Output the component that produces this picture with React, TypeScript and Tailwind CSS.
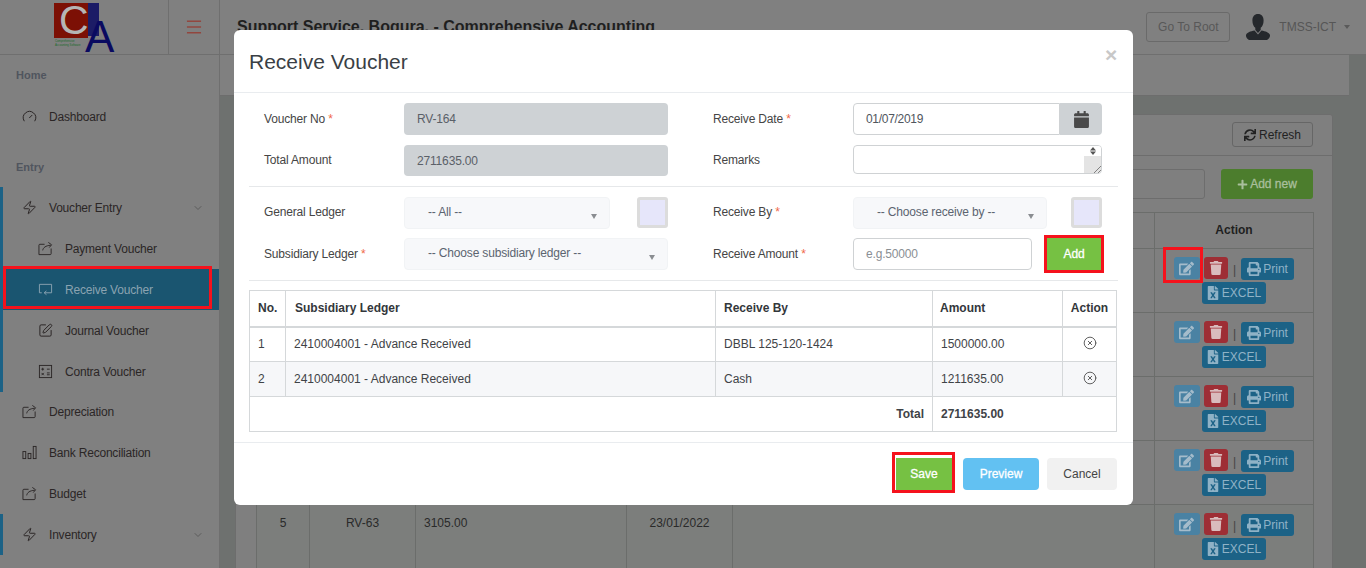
import type { ReactNode } from 'react';
import { CircleX, ChevronDown, Gauge, Menu, SquarePen, Zap } from 'lucide-react';
import { FaCalendar, FaEdit, FaFileExcel, FaPlus, FaPrint, FaSync, FaTrash } from 'react-icons/fa';

const ShareIcon = () => (
  <svg viewBox="0 0 16 16" className="h-[15px] w-[15px]" fill="none" stroke="currentColor" strokeWidth={1}>
    <path d="M7 3.500H2a1 1 0 0 0-1 1v10h12a1 1 0 0 0 1-1V8" />
    <path d="M5 10c.6-3 3-5 8.500-5.500M11 1.500l3.500 2.500L12 7" />
  </svg>
);

const ReceiveIcon = () => (
  <svg viewBox="0 0 16 16" className="h-[15px] w-[15px]" fill="none" stroke="currentColor" strokeWidth={1}>
    <path d="M4 11.500H1.500v-9h13v9H7" />
    <path d="M9 9.500l-2.500 2 2.500 2" />
  </svg>
);

const CalcIcon = () => (
  <svg viewBox="0 0 16 16" className="h-[15px] w-[15px]" fill="none" stroke="currentColor" strokeWidth={1}>
    <rect x="1.500" y="1.500" width="13" height="13" />
    <path d="M3.500 5.500h3M5 4v3M9.500 5.500h3M3.800 9.500l2.400 2.400M6.200 9.500l-2.400 2.400M9.500 9.500h3M9.500 11.500h3" />
  </svg>
);

const BarsIcon = () => (
  <svg viewBox="0 0 16 16" className="h-[15px] w-[15px]" fill="none" stroke="currentColor" strokeWidth={1}>
    <rect x="1" y="7" width="3" height="7.500" />
    <rect x="6.500" y="9" width="3" height="5.500" />
    <rect x="12" y="1.500" width="3" height="13" />
  </svg>
);

const Logo = () => (
  <svg viewBox="0 0 62 52" className="h-[52px] w-[62px] overflow-visible">
    <rect x="1" y="2" width="34" height="35" fill="#7c1005" />
    <rect x="35" y="2" width="11" height="33" fill="#1c1c66" />
    <text x="6" y="33" fontSize="41" fill="#b5b5b5" fontFamily="Liberation Sans, sans-serif">C</text>
    <text x="32" y="51" fontSize="44" fill="#0a0a60" fontFamily="Liberation Sans, sans-serif">A</text>
    <text x="2" y="40.500" fontSize="2.800" fill="#1c6b2c" fontFamily="Liberation Sans, sans-serif">Comprehensive</text>
    <text x="2" y="44.500" fontSize="2.800" fill="#1c6b2c" fontFamily="Liberation Sans, sans-serif">Accounting Software</text>
  </svg>
);

const Avatar = () => (
  <svg viewBox="0 0 26 26" className="h-[26px] w-[26px]">
    <path d="M13 0c3.600 0 5.600 2.600 5.600 6.400 0 3.400-1.300 6-2.900 7.400v2.200L13 19l-2.700-3v-2.200C8.700 12.400 7.400 9.800 7.400 6.400 7.400 2.600 9.400 0 13 0z" fill="#25282c" />
    <path d="M9.500 16.500 13 20.500l3.500-4c4 .8 7.500 2 8.500 4.500.4 1.500-1 4-3 5H4c-2-1-3.400-3.500-3-5 1-2.500 4.500-3.700 8.500-4.500z" fill="#25282c" />
  </svg>
);

const Triangle = () => (
  <svg viewBox="0 0 6 5" className="mt-[7px] h-[5px] w-[6px] shrink-0">
    <path d="M0 0h6L3 5z" fill="#8a8d91" />
  </svg>
);

const NavItem = ({ icon, label, sub, arrow }: { icon: ReactNode; label: string; sub?: boolean; arrow?: boolean }) => (
  <div className={`flex h-[41px] items-center text-[#2b2626] ${sub ? 'pl-[38px]' : 'pl-[22px]'}`}>
    <span className="flex w-[27px] shrink-0">{icon}</span>
    <span>{label}</span>
    {arrow && <ChevronDown className="ml-auto mr-[15px] h-[12px] w-[12px] text-[#5c5c5c]" strokeWidth={2} />}
  </div>
);

const Sidebar = () => (
  <aside className="h-full w-[220px] shrink-0 border-r border-[#6f6f6f] bg-[#808080] tracking-[-0.2px]">
    <div className="flex h-[41px] items-center pl-[16px] text-[11px] font-bold tracking-normal text-[#50555e]">Home</div>
    <NavItem icon={<Gauge className="h-[15px] w-[15px]" strokeWidth={1.6} />} label="Dashboard" />
    <div className="mt-[10px] flex h-[40px] items-center pl-[16px] text-[11px] font-bold tracking-normal text-[#50555e]">Entry</div>
    <div className="h-[205px] border-l-[3px] border-[#1c6286] [&>div]:-ml-[3px]">
      <NavItem icon={<Zap className="h-[15px] w-[15px]" strokeWidth={1.6} />} label="Voucher Entry" arrow />
      <NavItem icon={<ShareIcon />} label="Payment Voucher" sub />
      <div className="ml-0! flex h-[41px] items-center bg-[#1a5570] pl-[35px] text-[#8ba3b1]">
        <span className="flex w-[27px] shrink-0"><ReceiveIcon /></span>
        <span>Receive Voucher</span>
      </div>
      <NavItem icon={<SquarePen className="h-[15px] w-[15px]" strokeWidth={1.6} />} label="Journal Voucher" sub />
      <NavItem icon={<CalcIcon />} label="Contra Voucher" sub />
    </div>
    <div className="-mt-px">
      <NavItem icon={<ShareIcon />} label="Depreciation" />
      <NavItem icon={<BarsIcon />} label="Bank Reconciliation" />
      <NavItem icon={<ShareIcon />} label="Budget" />
    </div>
    <div className="border-l-[3px] border-[#1c6286] [&>div]:-ml-[3px]">
      <NavItem icon={<Zap className="h-[15px] w-[15px]" strokeWidth={1.6} />} label="Inventory" arrow />
    </div>
  </aside>
);

const ActionCell = () => (
  <td className="border border-[#6b6d6b] px-0 pt-[8px] align-top">
    <div className="flex items-start justify-center">
      <span className="flex h-[22px] w-[26px] items-center justify-center rounded-[3px] bg-[#4a82a3] text-[#a5bccb]">
        <FaEdit className="h-[15px] w-[15px]" />
      </span>
      <span className="ml-[4px] flex h-[22px] w-[24px] items-center justify-center rounded-[3px] bg-[#9e2e35] text-[#d9bcbd]">
        <FaTrash className="h-[14px] w-[14px]" />
      </span>
      <span className="mx-[5px] mt-[4px] text-[#444]">|</span>
      <span className="mt-[1px] flex h-[22px] w-[53px] items-center justify-center gap-[2px] rounded-[3px] bg-[#1c6286] text-[#8fb2c6]">
        <FaPrint className="h-[14px] w-[14px]" />Print
      </span>
    </div>
    <div className="mt-[2px] flex justify-center">
      <span className="flex h-[22px] w-[64px] items-center justify-center gap-[3px] rounded-[3px] bg-[#1c6286] text-[#8fb2c6]">
        <FaFileExcel className="h-[14px] w-[12px]" />EXCEL
      </span>
    </div>
  </td>
);

const Backdrop = () => (
  <div className="flex h-full flex-col">
    <header className="flex h-[55px] shrink-0 items-center border-b border-[#6f6f6f] bg-[#808080]">
      <div className="flex h-full w-[169px] items-start justify-center border-r border-[#6f6f6f] pt-[1px]">
        <Logo />
      </div>
      <div className="flex h-full w-[51px] items-center justify-center border-r border-[#6f6f6f] text-[#9c2a1e]">
        <Menu className="h-[20px] w-[20px]" strokeWidth={1.2} />
      </div>
      <div className="ml-[17px] text-[16px] font-bold tracking-normal text-[#1f1f1f]">Support Service, Bogura. - Comprehensive Accounting</div>
      <div className="ml-auto flex h-[30px] w-[84px] items-center justify-center rounded-[3px] border border-[#6a6a6a] text-[#585858]">Go To Root</div>
      <div className="ml-[15px]"><Avatar /></div>
      <span className="ml-[8px] text-[#565656]">TMSS-ICT</span>
      <span className="ml-[8px] mr-[16px] h-0 w-0 border-x-[3px] border-t-[4px] border-x-transparent border-t-[#5a5a5a]" />
    </header>
    <div className="flex min-h-0 flex-1">
      <Sidebar />
      <main className="flex-1 overflow-hidden bg-[#6e716f]">
        <div className="h-[41px] w-[1129px] border-b border-[#6d6d6d] bg-[#808080]" />
        <section className="ml-[15px] mt-[18px] w-[1098px] rounded-t-[3px] border border-[#6d6d6d] bg-[#7f7f7f]">
          <div className="flex h-[41px] items-start justify-end border-b border-[#6d6d6d] pr-[19px] pt-[7px]">
            <span className="flex h-[25px] w-[81px] items-center justify-center gap-[3px] rounded-[3px] border border-[#666] text-[#222]">
              <FaSync className="h-[12px] w-[12px]" />Refresh
            </span>
          </div>
          <div className="flex justify-end gap-[16px] pr-[19px] pt-[13px]">
            <div className="h-[30px] w-[300px] rounded-[3px] border border-[#6d6d6d]" />
            <span className="flex h-[30px] w-[92px] items-center justify-center gap-[2px] rounded-[3px] bg-[#4c7d2d] text-[#a9bf9c] [-webkit-text-stroke:0.3px_#a9bf9c]">
              <FaPlus className="h-[11px] w-[11px]" />Add new
            </span>
          </div>
          <div className="pl-[20px] pr-[19px] pt-[13px]">
            <table className="w-[1057px] table-fixed border-collapse text-[#2a2a2a]">
              <colgroup>
                <col className="w-[53px]" />
                <col className="w-[106px]" />
                <col className="w-[211px]" />
                <col className="w-[106px]" />
                <col className="w-[422px]" />
                <col className="w-[159px]" />
              </colgroup>
              <thead>
                <tr className="h-[36px]">
                  <th className="border border-[#6b6d6b]" />
                  <th className="border border-[#6b6d6b]" />
                  <th className="border border-[#6b6d6b]" />
                  <th className="border border-[#6b6d6b]" />
                  <th className="border border-[#6b6d6b]" />
                  <th className="border border-[#6b6d6b] pb-[2px] font-bold text-[#1f1f1f]">Action</th>
                </tr>
              </thead>
              <tbody>
                {[1, 2, 3, 4].map((n) => (
                  <tr key={n} className="h-[64px]">
                    <td className="border border-[#6b6d6b]" />
                    <td className="border border-[#6b6d6b]" />
                    <td className="border border-[#6b6d6b]" />
                    <td className="border border-[#6b6d6b]" />
                    <td className="border border-[#6b6d6b]" />
                    <ActionCell />
                  </tr>
                ))}
                <tr className="h-[64px] bg-[#7c7e7c]">
                  <td className="border border-[#6b6d6b] pt-[9px] text-center align-top">5</td>
                  <td className="border border-[#6b6d6b] pt-[9px] text-center align-top">RV-63</td>
                  <td className="border border-[#6b6d6b] pl-[8px] pt-[9px] align-top">3105.00</td>
                  <td className="border border-[#6b6d6b] pt-[9px] text-center align-top">23/01/2022</td>
                  <td className="border border-[#6b6d6b]" />
                  <ActionCell />
                </tr>
              </tbody>
            </table>
          </div>
        </section>
      </main>
    </div>
  </div>
);

const Field = ({ label, required, raised, width, children }: { label: string; required?: boolean; raised?: boolean; width: number; children: ReactNode }) => (
  <div className="flex items-center" style={{ width }}>
    <label className={`w-[140px] shrink-0 text-[#454545] ${raised ? 'pb-[2px]' : ''}`}>
      {label}
      {required && <span className="text-[#f0694a]"> *</span>}
    </label>
    {children}
  </div>
);

const Select = ({ text, className }: { text: string; className: string }) => (
  <div className={`flex h-[32px] items-center justify-between rounded-[4px] border border-[#f1f3f5] bg-[#f7f8fa] pl-[23px] pr-[12px] text-[#5b6470] ${className}`}>
    <span className="-mt-[2px]">{text}</span>
    <Triangle />
  </div>
);

const Swatch = () => <div className="h-[31px] w-[31px] -translate-y-px rounded-[3px] border-[3px] border-[#dcdcdc] bg-[#e6e6fa]" />;

const Modal = () => (
  <div className="absolute left-[234px] top-[30px] flex h-[475px] w-[899px] flex-col overflow-hidden rounded-[6px] bg-white tracking-[-0.17px]">
    <div className="flex h-[63px] shrink-0 items-start justify-between border-b border-[#e9ecef] pl-[15px] pr-[16px]">
      <h2 className="mt-[19px] text-[21px] leading-[26px] tracking-normal text-[#3a3f45]">Receive Voucher</h2>
      <span className="mt-[12px] text-[21px] font-bold leading-[26px] text-[#c8c8c8]">×</span>
    </div>
    <div className="flex flex-1 flex-col px-[15px]">
      <div className="flex gap-[45px] pl-[15px] pt-[10px]">
        <Field label="Voucher No" required width={404}>
          <div className="flex h-[32px] flex-1 items-center rounded-[4px] bg-[#ced2d5] pl-[13px] text-[#5a6068]">RV-164</div>
        </Field>
        <Field label="Receive Date" required width={389}>
          <div className="flex h-[32px] flex-1">
            <div className="flex flex-1 items-center rounded-l-[4px] border border-[#cfd2d4] pl-[12px] tracking-[-0.3px] text-[#50565e]">01/07/2019</div>
            <div className="flex w-[42px] items-center justify-center rounded-r-[4px] bg-[#ced2d5] text-[#4a4a4a]">
              <FaCalendar className="h-[17px] w-[17px]" />
            </div>
          </div>
        </Field>
      </div>
      <div className="flex gap-[45px] pl-[15px] pt-[10px]">
        <Field label="Total Amount" raised width={404}>
          <div className="flex h-[31px] flex-1 items-center rounded-[4px] bg-[#ced2d5] pl-[13px] text-[#5a6068]">2711635.00</div>
        </Field>
        <Field label="Remarks" raised width={389}>
          <div className="relative mb-[2px] h-[29px] flex-1">
            <textarea readOnly className="block h-full w-full resize-none overflow-hidden rounded-[4px] border border-[#cfd2d4] outline-none" />
            <div className="absolute bottom-px right-px top-px flex w-[17px] flex-col overflow-hidden rounded-r-[3px]">
              <div className="flex h-[10px] items-center justify-center bg-white">
                <svg viewBox="0 0 6 8" className="h-[8px] w-[6px]"><path d="M3 0l3 3.500H0zM3 8 0 4.500h6z" fill="#555" /></svg>
              </div>
              <div className="flex flex-1 items-end justify-end bg-[#e4e4e4]">
                <svg viewBox="0 0 8 8" className="h-[8px] w-[8px]" fill="none" stroke="#666" strokeWidth={0.8}><path d="M1 8l7-7M5 8l3-3" /></svg>
              </div>
            </div>
          </div>
        </Field>
      </div>
      <div className="mt-[10px] h-px bg-[#e6e8ea]" />
      <div className="flex gap-[45px] pl-[15px] pt-[10px]">
        <Field label="General Ledger" raised width={404}>
          <Select text="-- All --" className="w-[206px]" />
          <div className="ml-[27px]"><Swatch /></div>
        </Field>
        <Field label="Receive By" required raised width={389}>
          <Select text="-- Choose receive by --" className="w-[194px]" />
          <div className="ml-[24px]"><Swatch /></div>
        </Field>
      </div>
      <div className="flex gap-[45px] pl-[15px] pt-[9px]">
        <Field label="Subsidiary Ledger" required width={404}>
          <Select text="-- Choose subsidiary ledger --" className="flex-1" />
        </Field>
        <Field label="Receive Amount" required width={389}>
          <div className="flex h-[32px] w-[179px] items-center rounded-[4px] border border-[#cfd2d4] pl-[12px] text-[#8a8f94]">e.g.50000</div>
          <button className="ml-[15px] h-[32px] w-[54px] bg-[#76c143] text-white outline-[3px] outline-[#f5121c] [-webkit-text-stroke:0.3px_white]">Add</button>
        </Field>
      </div>
      <div className="mt-[10px] h-px bg-[#e6e8ea]" />
      <table className="mt-[9px] w-[867px] table-fixed border-collapse tracking-normal text-[#3f4347]">
        <colgroup>
          <col className="w-[36px]" />
          <col className="w-[430px]" />
          <col className="w-[217px]" />
          <col className="w-[130px]" />
          <col className="w-[54px]" />
        </colgroup>
        <thead>
          <tr className="h-[36px] text-left text-[#33373b]">
            <th className="border border-b-2 border-[#d5d8da] pl-[8px] font-bold">No.</th>
            <th className="border border-b-2 border-[#d5d8da] pl-[9px] font-bold">Subsidiary Ledger</th>
            <th className="border border-b-2 border-[#d5d8da] pl-[8px] font-bold">Receive By</th>
            <th className="border border-b-2 border-[#d5d8da] pl-[7px] font-bold">Amount</th>
            <th className="border border-b-2 border-[#d5d8da] text-center font-bold">Action</th>
          </tr>
        </thead>
        <tbody>
          <tr className="h-[35px]">
            <td className="border border-[#d5d8da] pl-[8px]">1</td>
            <td className="border border-[#d5d8da] pl-[8px]">2410004001 - Advance Received</td>
            <td className="border border-[#d5d8da] pl-[8px]">DBBL 125-120-1424</td>
            <td className="border border-[#d5d8da] pl-[8px]">1500000.00</td>
            <td className="border border-[#d5d8da]"><CircleX className="mx-auto -mt-[2px] h-[14px] w-[14px] text-[#555]" strokeWidth={1.6} /></td>
          </tr>
          <tr className="h-[35px] bg-[#f6f7f9]">
            <td className="border border-[#d5d8da] pl-[8px]">2</td>
            <td className="border border-[#d5d8da] pl-[8px]">2410004001 - Advance Received</td>
            <td className="border border-[#d5d8da] pl-[8px]">Cash</td>
            <td className="border border-[#d5d8da] pl-[8px]">1211635.00</td>
            <td className="border border-[#d5d8da]"><CircleX className="mx-auto -mt-[2px] h-[14px] w-[14px] text-[#555]" strokeWidth={1.6} /></td>
          </tr>
          <tr className="h-[35px]">
            <td colSpan={3} className="border border-[#d5d8da] pr-[8px] text-right font-bold">Total</td>
            <td colSpan={2} className="border border-[#d5d8da] pl-[8px] font-bold">2711635.00</td>
          </tr>
        </tbody>
      </table>
    </div>
    <div className="flex h-[63px] shrink-0 items-start justify-end gap-[8px] border-t border-[#e9ecef] pr-[16px] pt-[9px] tracking-normal">
      <div className="h-[41px] w-[63px] border-[3px] border-[#f5121c] pl-[1px] pt-[3px]">
        <button className="h-[32px] w-[56px] bg-[#76c143] text-white [-webkit-text-stroke:0.3px_white]">Save</button>
      </div>
      <button className="mt-[6px] h-[32px] w-[76px] rounded-[4px] bg-[#62c1f2] text-white [-webkit-text-stroke:0.3px_white]">Preview</button>
      <button className="mt-[6px] h-[32px] w-[70px] rounded-[4px] bg-[#f1f1f1] text-[#444]">Cancel</button>
    </div>
  </div>
);

export default function App() {
  return (
    <div className="relative h-[568px] w-[1366px] overflow-hidden bg-[#6e716f] text-[12px] [font-family:'Liberation_Sans',Arial,sans-serif]">
      <Backdrop />
      <Modal />
      <div className="absolute left-[3px] top-[266px] h-[43px] w-[209px] border-[3px] border-[#f5121c]" />
      <div className="absolute left-[1163px] top-[247px] h-[36px] w-[40px] border-[3px] border-[#f5121c]" />
    </div>
  );
}
